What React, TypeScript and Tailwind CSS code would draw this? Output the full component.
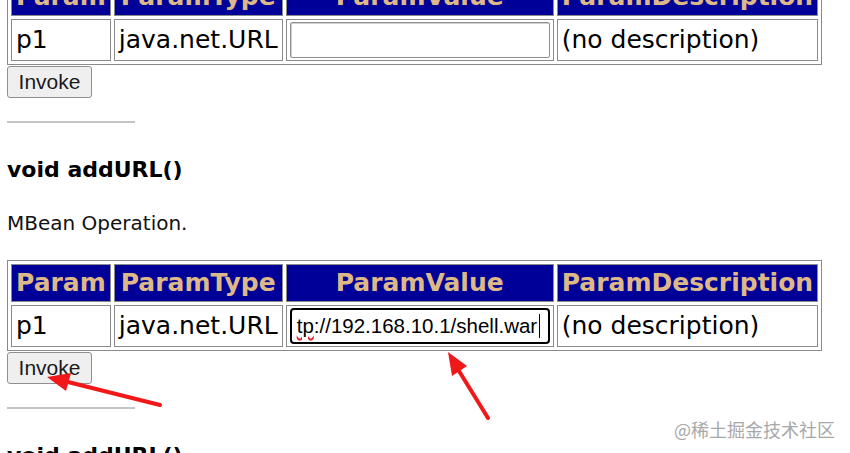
import React from 'react'

const verdana = { fontFamily: '"DejaVu Sans", Verdana, sans-serif' }

function ParamTable({ focused }: { focused?: boolean }) {
  return (
    <table className="border-separate border-spacing-[3px] border border-[#8a8a8a] text-[25px] text-black">
      <thead>
        <tr>
          {['Param', 'ParamType', 'ParamValue', 'ParamDescription'].map((h) => (
            <th
              key={h}
              className="border border-[#8a8a8a] bg-[#000099] px-[4px] py-[3px] text-center font-bold leading-[30px] text-[#deb887]"
            >
              {h}
            </th>
          ))}
        </tr>
      </thead>
      <tbody>
        <tr>
          <td className="border border-[#8a8a8a] px-[4px] py-[2px] leading-[36px]">p1</td>
          <td className="border border-[#8a8a8a] px-[4px] py-[2px] leading-[36px]">java.net.URL</td>
          <td className="border border-[#8a8a8a] px-[3px] py-[2px]">
            {focused ? (
              <div className="flex h-[36px] w-[260px] items-center overflow-hidden whitespace-nowrap rounded-[4px] border-2 border-black bg-white pl-[5px] font-['Liberation_Sans',Arial,sans-serif] text-[20.5px] leading-[26px]">
                <span className="underline decoration-[#e02020] decoration-wavy decoration-[1.5px] underline-offset-[1px]">tp</span>
                <span>://192.168.10.1/shell.war</span>
                <span className="ml-[2px] h-[24px] w-px bg-black" />
              </div>
            ) : (
              <div className="h-[36px] w-[260px] rounded-[2px] border border-[#8f8f8f] bg-white shadow-[inset_1px_1px_0_#d0d0d0]" />
            )}
          </td>
          <td className="border border-[#8a8a8a] px-[4px] py-[2px] leading-[36px]">(no description)</td>
        </tr>
      </tbody>
    </table>
  )
}

function InvokeButton() {
  return (
    <button className="mt-px flex h-[32px] w-[85px] items-center justify-center rounded-[3px] border border-[#8f8f8f] bg-[#efefef] font-['Liberation_Sans',Arial,sans-serif] text-[21px] text-[#1a1a1a]">
      Invoke
    </button>
  )
}

function OperationHeader() {
  return (
    <>
      <div className="mt-[23px] h-[2px] w-[128px] bg-[#c4c4c4]" />
      <h3 className="mt-[34px] text-[22px] font-bold leading-[26px] text-black">void addURL()</h3>
    </>
  )
}

export default function App() {
  return (
    <div className="relative h-[453px] w-[850px] overflow-hidden bg-white" style={verdana}>
      <div className="-mt-[26px] pl-[7px]">
        <ParamTable />
        <InvokeButton />
        <OperationHeader />
        <p className="mt-[28px] text-[20px] leading-[24px] text-[#111]">MBean Operation.</p>
        <div className="mt-[25px]">
          <ParamTable focused />
        </div>
        <InvokeButton />
        <OperationHeader />
      </div>

      <svg className="pointer-events-none absolute left-0 top-0" width="850" height="453" viewBox="0 0 850 453">
        <line x1="160" y1="405" x2="68" y2="382" stroke="#f01818" strokeWidth="4" strokeLinecap="round" />
        <polygon points="47,377 71,373 66,391" fill="#f01818" />
        <line x1="488" y1="418" x2="459" y2="371" stroke="#f01818" strokeWidth="4" strokeLinecap="round" />
        <polygon points="448,352 467,366 452,376" fill="#f01818" />
      </svg>

      <div className="absolute left-[674px] top-[417px] font-['Noto_Sans_CJK_SC',sans-serif] text-[18px] leading-[24px] text-[#a8a8a8]">
        @稀土掘金技术社区
      </div>
    </div>
  )
}
